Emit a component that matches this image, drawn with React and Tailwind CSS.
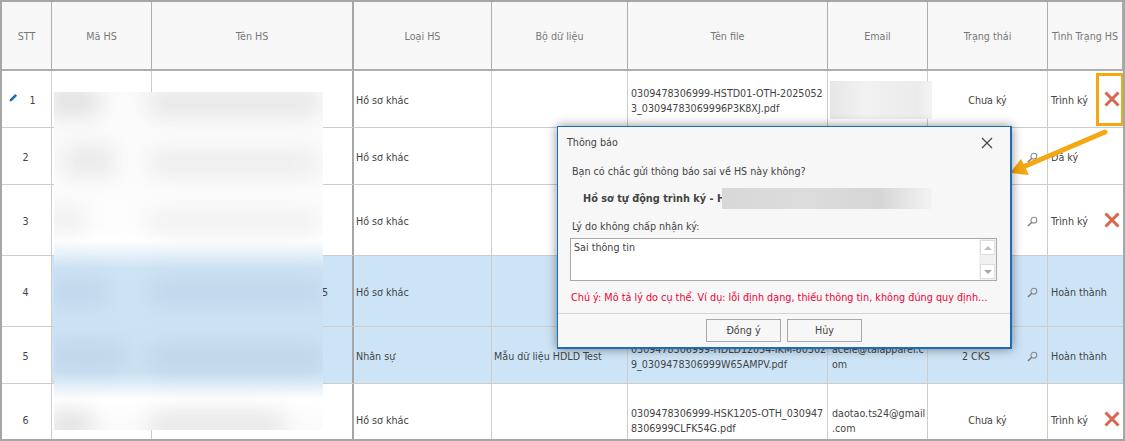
import React from "react";

const widths = ["w-[50px]", "w-[100px]", "w-[202px]", "w-[138px]", "w-[136px]", "w-[200px]", "w-[100px]", "w-[120px]", "w-[75px]"];
const heads = ["STT", "Mã HS", "Tên HS", "Loại HS", "Bộ dữ liệu", "Tên file", "Email", "Trạng thái", "Tình Trạng HS"];

const rows = [
  { n: "1", h: "h-[57px]", pencil: true, type: "Hồ sơ khác", set: "", file: ["0309478306999-HSTD01-OTH-2025052", "3_03094783069996P3K8XJ.pdf"], email: [], state: "Chưa ký", status: "Trình ký", x: true },
  { n: "2", h: "h-[57px]", type: "Hồ sơ khác", set: "", file: [], email: [], state: "", search: true, status: "Đã ký" },
  { n: "3", h: "h-[71px]", type: "Hồ sơ khác", set: "", file: [], email: [], state: "", search: true, status: "Trình ký", x: true },
  { n: "4", h: "h-[71px]", sel: true, tail: "5", type: "Hồ sơ khác", set: "", file: [], email: [], state: "", search: true, status: "Hoàn thành" },
  { n: "5", h: "h-[57px]", sel: true, type: "Nhân sự", set: "Mẫu dữ liệu HDLD Test", file: ["0309478306999-HDLD12054-IKM-60302", "9_0309478306999W65AMPV.pdf"], email: ["acele@talapparel.c", "om"], state: "2 CKS", search: true, status: "Hoàn thành" },
  { n: "6", h: "h-[71px]", type: "Hồ sơ khác", set: "", file: ["0309478306999-HSK1205-OTH_030947", "8306999CLFK54G.pdf"], email: ["daotao.ts24@gmail", ".com"], state: "Chưa ký", status: "Trình ký", x: true },
];

const blobs = [
  "left-[-6px] top-[-6px] w-[50px] h-[30px] bg-[#e0e0e0]",
  "left-[95px] top-[-4px] w-[170px] h-[28px] bg-[#e6e6e6]",
  "left-[10px] top-[54px] w-[50px] h-[30px] bg-[#e8e8e8]",
  "left-[95px] top-[58px] w-[170px] h-[26px] bg-[#ececec]",
  "left-[-6px] top-[114px] w-[36px] h-[26px] bg-[#eeeeee]",
  "left-[95px] top-[118px] w-[170px] h-[24px] bg-[#f0f0f0]",
  "left-[-6px] top-[186px] w-[60px] h-[28px] bg-[#bfd7ea]",
  "left-[95px] top-[186px] w-[175px] h-[28px] bg-[#bfd7ea]",
  "left-[-6px] top-[250px] w-[76px] h-[28px] bg-[#bfd6e8]",
  "left-[95px] top-[252px] w-[175px] h-[28px] bg-[#bfd6e8]",
  "left-[-6px] top-[320px] w-[44px] h-[26px] bg-[#e0e0e0]",
  "left-[95px] top-[320px] w-[135px] h-[26px] bg-[#e6e6e6]",
];

function XMark({ className }) {
  return (
    <svg viewBox="0 0 16 16" className={className}>
      <path d="M1.5 1.5 14.5 14.5M14.5 1.5 1.5 14.5" stroke="#d8664a" strokeWidth="3" fill="none" />
    </svg>
  );
}

function Search() {
  return (
    <svg viewBox="0 0 12 12" className="w-[11px] h-[11px] shrink-0">
      <circle cx="7.5" cy="4.5" r="3.2" stroke="#8a8a8a" strokeWidth="1.2" fill="none" />
      <path d="M5 7 1 11" stroke="#777" strokeWidth="1.5" />
    </svg>
  );
}

function Pencil() {
  return (
    <svg viewBox="0 0 10 10" className="w-[9px] h-[9px] shrink-0">
      <path d="M0.5 9.5 1.2 6.8 7 1 9 3 3.2 8.8Z" fill="#1f6db0" />
    </svg>
  );
}

function Cell({ i, className = "", children, line = "border-[#cccccc]" }) {
  return (
    <div className={`${widths[i]} shrink-0 h-full border-r ${i === 2 ? "border-r-2 border-[#a6a6a6]" : line} flex items-center ${className}`}>
      {children}
    </div>
  );
}

export default function App() {
  return (
    <div className="relative w-[1125px] h-[441px] overflow-hidden border-2 border-[#a6a6a6] bg-white text-[10.65px] leading-[15px] text-[#444444] font-['DejaVu_Sans_Condensed','Liberation_Sans',sans-serif]">
      <div className="flex h-[69px] bg-[#f7f7f7] border-b-2 border-[#adadad] text-[#777777]">
        {heads.map((t, i) => (
          <Cell key={t} i={i} line="border-[#adadad]" className="justify-center pt-[1px]">
            {t}
          </Cell>
        ))}
      </div>

      {rows.map((r) => (
        <div key={r.n} className={`flex ${r.h} shrink-0 border-b border-[#cccccc] bg-white`}>
          <Cell i={0} className="relative justify-center pt-[3px]">
            {r.pencil && (
              <span className="absolute left-[7px] top-[22px]">
                <Pencil />
              </span>
            )}
            <span className={r.pencil ? "ml-[12px]" : "mr-[2px]"}>{r.n}</span>
          </Cell>
          <Cell i={1} className={r.sel ? "bg-[#cde4f7]" : ""} />
          <Cell i={2} className={`justify-end pr-[24px] pt-[3px] ${r.sel ? "bg-[#cde4f7]" : ""}`}>
            {r.tail}
          </Cell>
          <Cell i={3} className={`pl-[2px] pt-[3px] ${r.sel ? "bg-[#cde4f7]" : ""}`}>{r.type}</Cell>
          <Cell i={4} className={`pl-[2px] pt-[3px] whitespace-nowrap ${r.sel ? "bg-[#cde4f7]" : ""}`}>{r.set}</Cell>
          <Cell i={5} className={`pl-[3px] pt-[3px] ${r.sel ? "bg-[#cde4f7]" : ""}`}>
            <div className="whitespace-nowrap">
              {r.file.map((l) => (
                <div key={l}>{l}</div>
              ))}
            </div>
          </Cell>
          <Cell i={6} className={`pl-[4px] pt-[3px] ${r.sel ? "bg-[#cde4f7]" : ""}`}>
            <div className="whitespace-nowrap">
              {r.email.map((l) => (
                <div key={l}>{l}</div>
              ))}
            </div>
          </Cell>
          <Cell i={7} className={`pt-[3px] ${r.search ? "pr-[9px]" : ""} ${r.sel ? "bg-[#cde4f7]" : ""}`}>
            <span className={`flex-1 text-center ${r.search ? "pr-[3px]" : ""}`}>{r.state}</span>
            {r.search && <Search />}
          </Cell>
          <div className={`flex-1 h-full pt-[3px] flex items-center pl-[3px] ${r.sel ? "bg-[#cde4f7]" : ""}`}>
            <span className="flex-1 whitespace-nowrap">{r.status}</span>
            {r.x && <XMark className="w-[16px] h-[16px] mr-[3px] mb-[3px]" />}
          </div>
        </div>
      ))}

      {/* blurred redactions */}
      <div className="absolute left-[52px] top-[90px] w-[269px] h-[338px] overflow-hidden bg-[linear-gradient(to_bottom,#fbfbfb_0%,#fdfdfd_40%,#ffffff_44%,#cfe4f5_52%,#cde3f4_83%,#ffffff_91%,#fbfbfb_100%)]">
        {blobs.map((b) => (
          <div key={b} className={`absolute blur-[11px] ${b}`} />
        ))}
      </div>
      <div className="absolute left-[828px] top-[79px] w-[102px] h-[38px] bg-[linear-gradient(to_right,#e6e6e6,#f2f2f2_35%,#ebebeb_85%,#f3f3f3)]" />

      {/* orange callout */}
      <div className="absolute left-[1094px] top-[71px] w-[28px] h-[53px] border-[3px] border-[#f5a711]" />
      <svg className="absolute left-[1005px] top-[125px] w-[110px] h-[60px]" viewBox="0 0 110 60">
        <path d="M98 5 16 40" stroke="#f5a711" strokeWidth="5" strokeLinecap="round" fill="none" />
        <path d="M3 46 14 32 22 48Z" fill="#f5a711" />
      </svg>

      {/* dialog */}
      <div className="absolute left-[555px] top-[124px] w-[455px] h-[223px] flex flex-col bg-[#f7f7f7] border-2 border-[#1b6eb6] border-l border-t shadow-[0_0_10px_rgba(0,0,0,0.45)]">
        <div className="flex items-center justify-between h-[30px] pt-[1px] pl-[9px] pr-[17px] shrink-0">
          <span>Thông báo</span>
          <svg viewBox="0 0 12 12" className="w-[12px] h-[12px]">
            <path d="M1 1 11 11M11 1 1 11" stroke="#444" strokeWidth="1.2" fill="none" />
          </svg>
        </div>
        <div className="flex-1 flex flex-col pl-[14px] pr-[13px] min-h-0">
          <div className="mt-[7px]">Bạn có chắc gửi thông báo sai về HS này không?</div>
          <div className="relative mt-[12px] ml-[11px] h-[15px] text-[10.85px] font-bold whitespace-nowrap">
            Hồ sơ tự động trình ký - H
            <div className="absolute left-[139px] top-[-3px] w-[210px] h-[21px] bg-[linear-gradient(to_right,#d8d8d8,#dcdcdc_40%,#d6d6d6_75%,#f3f3f3)]" />
          </div>
          <div className="mt-[13px]">Lý do không chấp nhận ký:</div>
          <div className="mt-[4px] flex justify-between h-[43px] w-[427px] ml-[-2px] bg-white border border-[#a9a9a9]">
            <span className="pl-[3px] pt-[1px]">Sai thông tin</span>
            <div className="w-[17px] h-full flex flex-col justify-between bg-[#f1f1f1] px-[1px] py-[1px]">
              <div className="h-[15px] bg-white border border-[#dddddd] flex items-center justify-center">
                <div className="border-x-[4px] border-b-[4px] border-x-transparent border-b-[#c0c0c0]" />
              </div>
              <div className="h-[15px] bg-white border border-[#dddddd] flex items-center justify-center">
                <div className="border-x-[4px] border-t-[4px] border-x-transparent border-t-[#a8a8a8]" />
              </div>
            </div>
          </div>
          <div className="mt-[9px] ml-[-1px] whitespace-nowrap text-[10.75px] text-[#ee0038]">
            Chú ý: Mô tả lý do cụ thể. Ví dụ: lỗi định dạng, thiếu thông tin, không đúng quy định…
          </div>
        </div>
        <div className="h-[34px] shrink-0 border-t border-[#d5d5d5] flex items-center justify-end gap-[6px] pr-[148px]">
          <button className="w-[75px] h-[23px] bg-[#f7f7f7] border border-[#a9a9a9]">Đồng ý</button>
          <button className="w-[75px] h-[23px] bg-[#f7f7f7] border border-[#a9a9a9]">Hủy</button>
        </div>
      </div>
    </div>
  );
}
